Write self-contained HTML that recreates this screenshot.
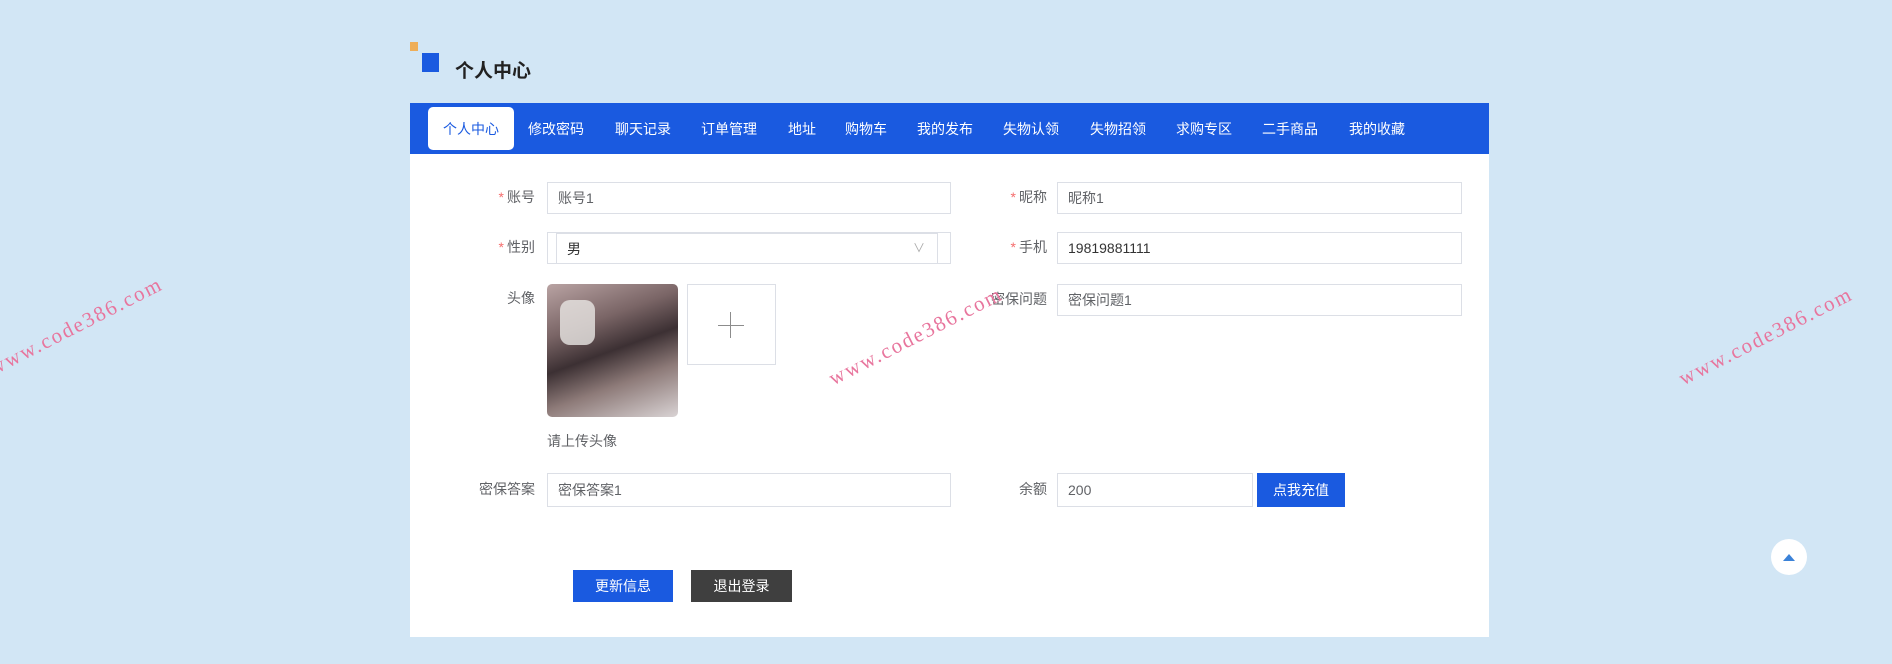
<!DOCTYPE html>
<html><head><meta charset="utf-8"><style>
*{margin:0;padding:0;box-sizing:border-box}
body{width:1892px;height:664px;background:#d2e6f5;position:relative;overflow:hidden;font-family:"Liberation Sans","Noto Sans CJK SC",sans-serif;color:#333}
.a{position:absolute}
.tab{position:absolute;top:119px;color:#fff;font-size:14px;line-height:20px;white-space:nowrap}
.inp{position:absolute;background:#fff;border:1px solid #dcdfe6;font-size:14px;color:#606266;padding-left:10px;display:flex;align-items:center}
.lbl{position:absolute;font-size:14px;color:#606266;text-align:right;width:100px;line-height:20px}
.lbl i{color:#f56c6c;font-style:normal;margin-right:3px}
.wm{position:absolute;font-family:"Liberation Serif",serif;font-size:21px;letter-spacing:2px;color:#e8759d;transform:rotate(-27deg);transform-origin:left bottom;white-space:nowrap}
</style></head><body>
<div class="a" style="left:410px;top:42px;width:8px;height:9px;background:#eeae58"></div>
<div class="a" style="left:422px;top:53px;width:17px;height:19px;background:#1a5ae0"></div>
<div class="a" style="left:455px;top:60px;font-size:19px;font-weight:bold;color:#222;line-height:24px">个人中心</div>

<div class="a" style="left:410px;top:103px;width:1079px;height:534px;background:#fff"></div>
<div class="a" style="left:410px;top:103px;width:1079px;height:51px;background:#1a5ae0"></div>
<div class="a" style="left:428px;top:107px;width:86px;height:43px;background:#fff;border-radius:5px"></div>
<div class="tab" style="left:443px;color:#1a5ae0">个人中心</div>
<div class="tab" style="left:528px">修改密码</div>
<div class="tab" style="left:615px">聊天记录</div>
<div class="tab" style="left:701px">订单管理</div>
<div class="tab" style="left:788px">地址</div>
<div class="tab" style="left:845px">购物车</div>
<div class="tab" style="left:917px">我的发布</div>
<div class="tab" style="left:1003px">失物认领</div>
<div class="tab" style="left:1090px">失物招领</div>
<div class="tab" style="left:1176px">求购专区</div>
<div class="tab" style="left:1262px">二手商品</div>
<div class="tab" style="left:1349px">我的收藏</div>

<div class="lbl" style="left:435px;top:187px"><i>*</i>账号</div>
<div class="inp" style="left:547px;top:182px;width:404px;height:32px">账号1</div>
<div class="lbl" style="left:947px;top:187px"><i>*</i>昵称</div>
<div class="inp" style="left:1057px;top:182px;width:405px;height:32px">昵称1</div>

<div class="lbl" style="left:435px;top:237px"><i>*</i>性别</div>
<div class="inp" style="left:547px;top:232px;width:404px;height:32px;padding:0"></div>
<div class="inp" style="left:556px;top:233px;width:382px;height:30px;border-width:1px 1px 0 1px;color:#333">男<span style="position:absolute;right:12px;top:5px;color:#aaa;font-size:12px">∨</span></div>
<div class="lbl" style="left:947px;top:237px"><i>*</i>手机</div>
<div class="inp" style="left:1057px;top:232px;width:405px;height:32px;color:#333">19819881111</div>

<div class="lbl" style="left:435px;top:288px">头像</div>
<div class="a" style="left:547px;top:284px;width:131px;height:133px;border-radius:5px;background:linear-gradient(160deg,#b9a3a3 0%,#7a6566 30%,#3c3033 50%,#8d7a78 70%,#d9d3d4 100%)"></div>
<div class="a" style="left:560px;top:300px;width:35px;height:45px;border-radius:10px;background:#e8e6e4;opacity:.8"></div>
<div class="a" style="left:687px;top:284px;width:89px;height:81px;border:1px solid #dcdfe6"></div>
<div class="a" style="left:730px;top:312px;width:1px;height:26px;background:#8c8c8c"></div>
<div class="a" style="left:718px;top:325px;width:26px;height:1px;background:#8c8c8c"></div>
<div class="a" style="left:547px;top:431px;font-size:14px;color:#606266">请上传头像</div>
<div class="lbl" style="left:947px;top:289px">密保问题</div>
<div class="inp" style="left:1057px;top:284px;width:405px;height:32px">密保问题1</div>

<div class="lbl" style="left:435px;top:479px">密保答案</div>
<div class="inp" style="left:547px;top:473px;width:404px;height:34px">密保答案1</div>
<div class="lbl" style="left:947px;top:479px">余额</div>
<div class="inp" style="left:1057px;top:473px;width:196px;height:34px">200</div>
<div class="a" style="left:1257px;top:473px;width:88px;height:34px;background:#1a5ae0;color:#fff;font-size:14px;text-align:center;line-height:34px">点我充值</div>

<div class="a" style="left:573px;top:570px;width:100px;height:32px;background:#1a5ae0;color:#fff;font-size:14px;text-align:center;line-height:32px">更新信息</div>
<div class="a" style="left:691px;top:570px;width:101px;height:32px;background:#3f3f3f;color:#fff;font-size:14px;text-align:center;line-height:32px">退出登录</div>

<div class="a" style="left:1771px;top:539px;width:36px;height:36px;border-radius:50%;background:#fff"></div>
<div class="a" style="left:1783px;top:554px;width:0;height:0;border-left:6px solid transparent;border-right:6px solid transparent;border-bottom:7px solid #3b82d8"></div>

<div class="wm" style="left:-4px;top:356px">www.code386.com</div>
<div class="wm" style="left:836px;top:366px">www.code386.com</div>
<div class="wm" style="left:1686px;top:366px">www.code386.com</div>
</body></html>
